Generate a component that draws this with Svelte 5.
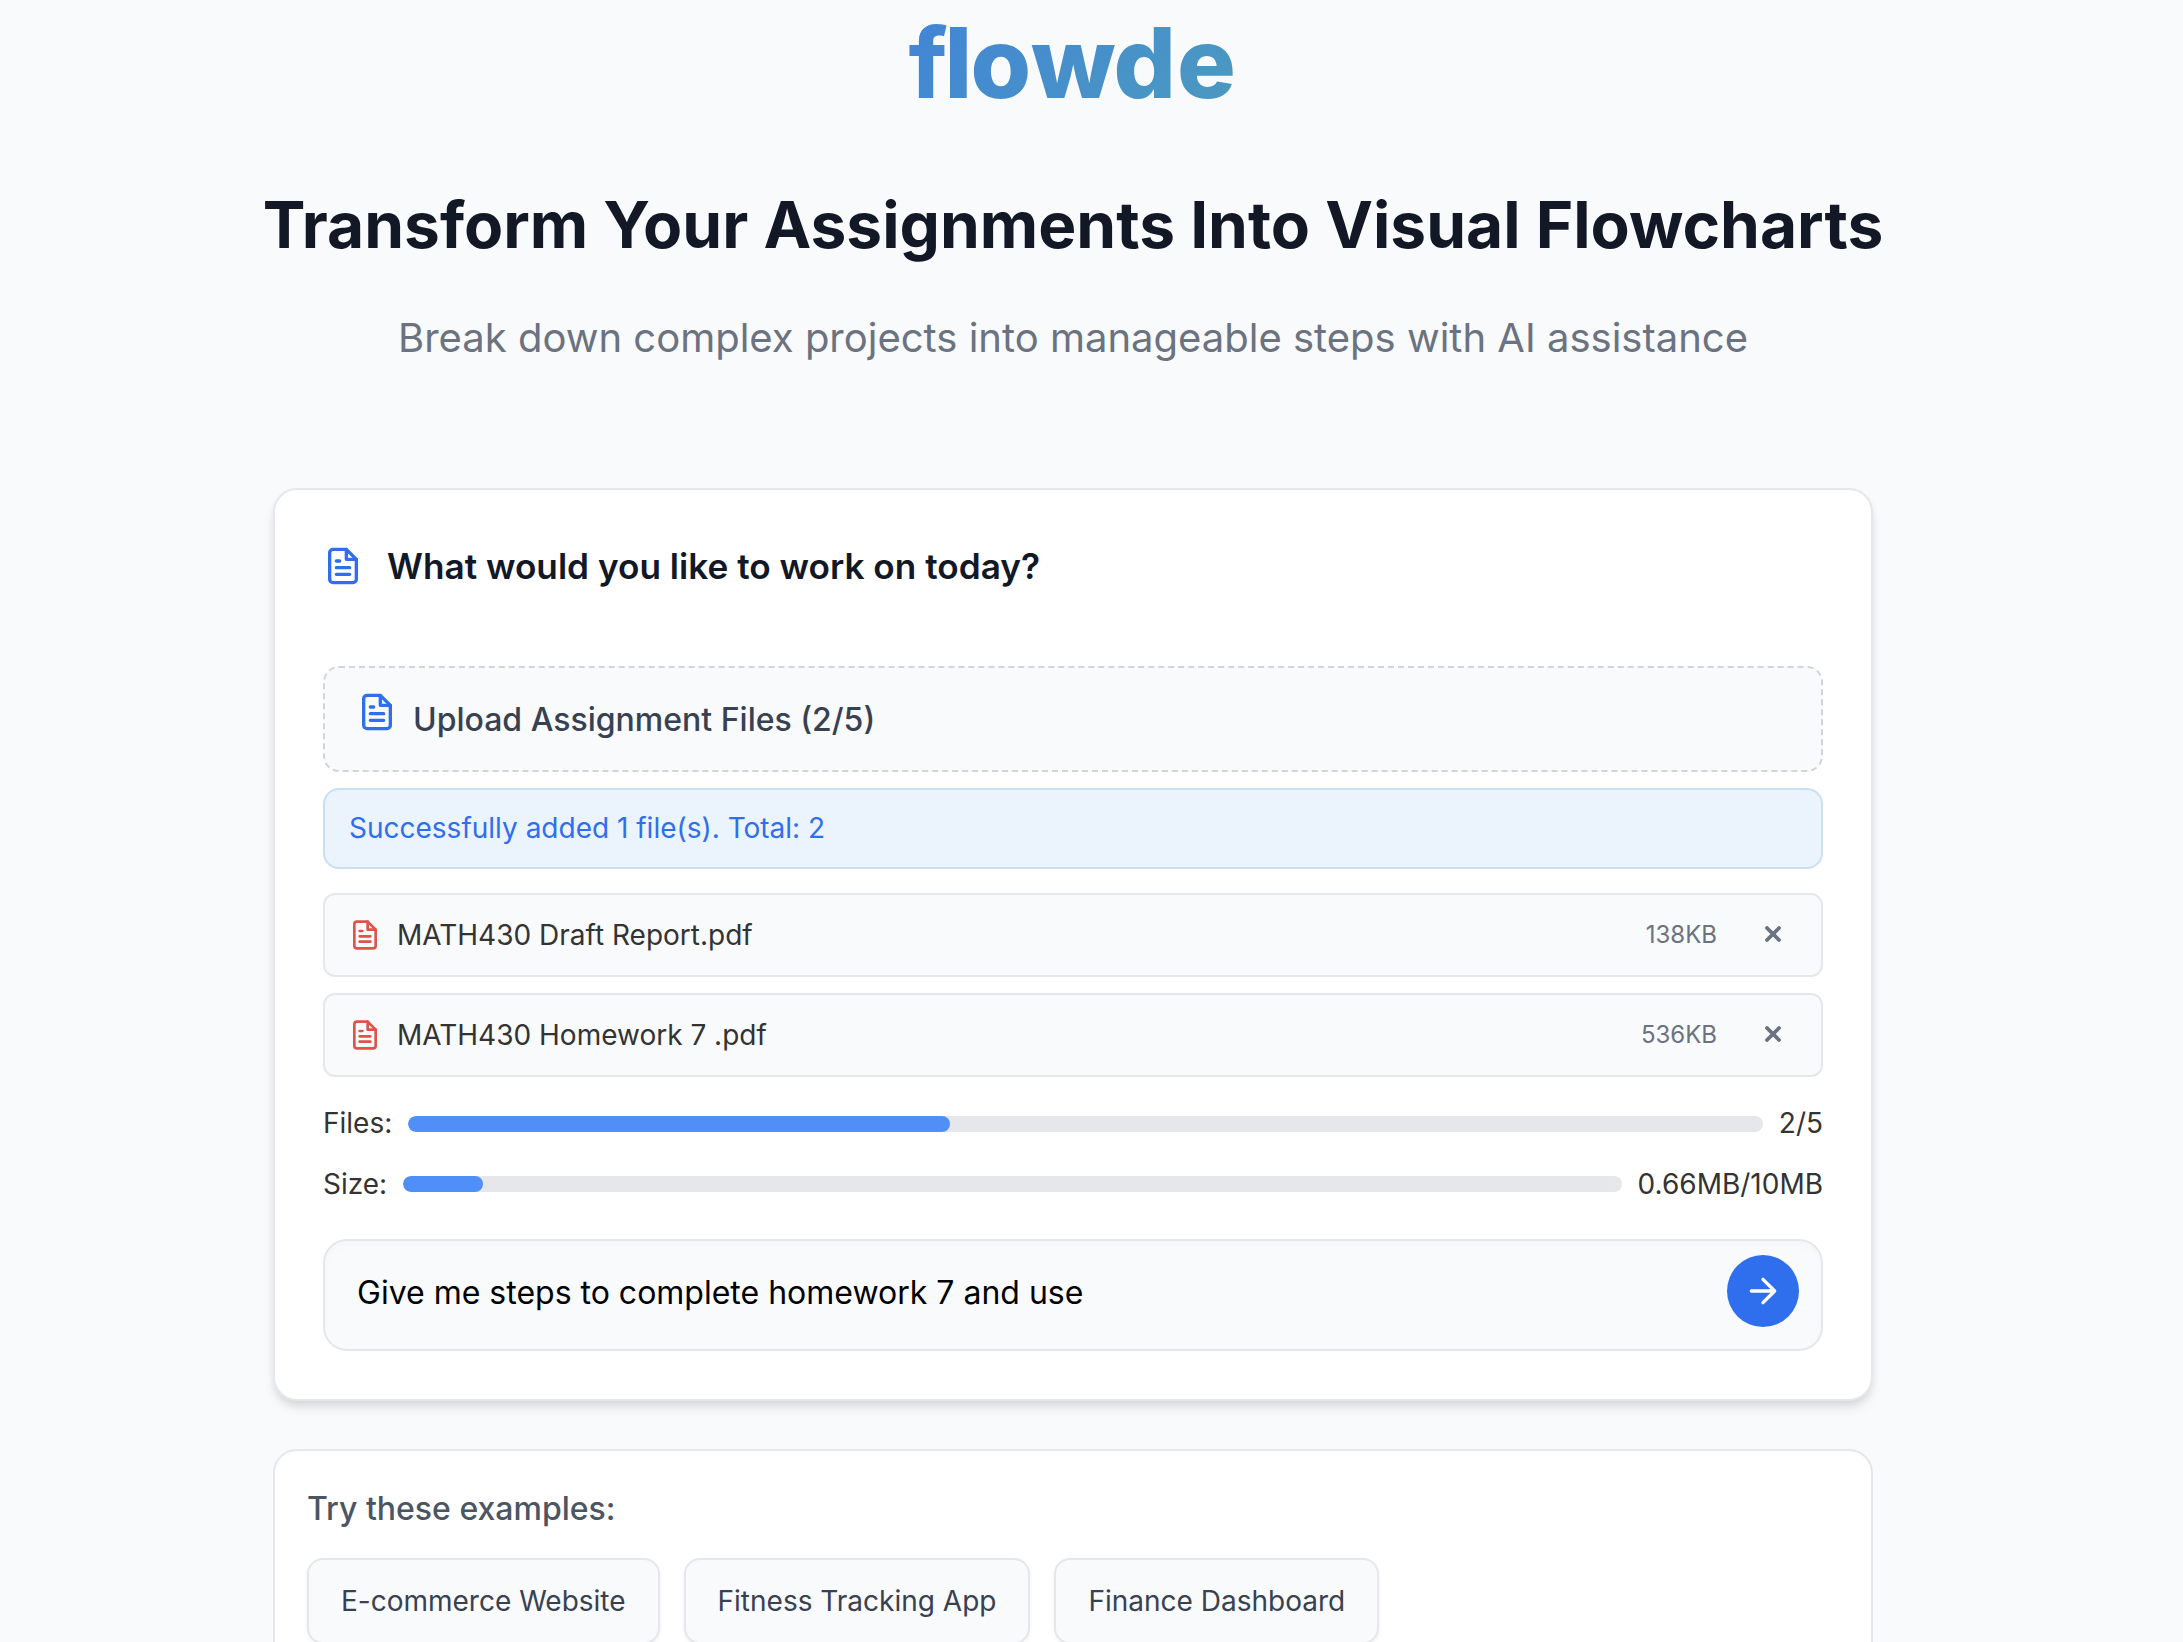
<script>
  const files = [
    { name: 'MATH430 Draft Report.pdf', size: '138KB' },
    { name: 'MATH430 Homework 7 .pdf', size: '536KB' }
  ];
  const meters = [
    { label: 'Files:', value: '2/5', percent: 40 },
    { label: 'Size:', value: '0.66MB/10MB', percent: 6.56 }
  ];
  const examples = ['E-commerce Website', 'Fitness Tracking App', 'Finance Dashboard'];
  const prompt = 'Give me steps to complete homework 7 and use';
</script>

{#snippet fileIcon(kind)}
  <svg class="icon {kind}" viewBox="0 0 24 24" aria-hidden="true">
    <path d="M14 2H6a2 2 0 0 0-2 2v16a2 2 0 0 0 2 2h12a2 2 0 0 0 2-2V8z" />
    <path d="M14 2v6h6M16 13H8M16 17H8M10 9H8" />
  </svg>
{/snippet}

<main>
  <header>
    <svg class="logo" viewBox="0 0 340 126">
      <defs>
        <linearGradient id="brand" gradientUnits="userSpaceOnUse" x1="60" y1="-40" x2="280" y2="170">
          <stop offset="0" stop-color="#4285d6" />
          <stop offset="1" stop-color="#4b9abf" />
        </linearGradient>
      </defs>
      <text x="5.5 41.5 67.5 128 210.5 274" y="98"><tspan class="narrow">f</tspan>lowde</text>
    </svg>
    <h1>Transform Your Assignments Into Visual Flowcharts</h1>
    <p>Break down complex projects into manageable steps with AI assistance</p>
  </header>

  <section class="card work">
    <h2>{@render fileIcon('large')}<span>What would you like to work on today?</span></h2>

    <div class="upload">{@render fileIcon('large raised')}<span>Upload Assignment Files (2/5)</span></div>
    <div class="notice">Successfully added 1 file(s). Total: 2</div>

    <ul class="files">
      {#each files as file}
        <li>
          {@render fileIcon('small')}
          <span class="name">{file.name}</span>
          <span class="size">{file.size}</span>
          <button class="remove" aria-label="Remove">
            <svg viewBox="0 0 16 16"><path d="M2 2l12 12M14 2L2 14" /></svg>
          </button>
        </li>
      {/each}
    </ul>

    <div class="meters">
      {#each meters as meter}
        <div class="meter">
          <span>{meter.label}</span>
          <div class="track"><div class="fill" style="width: {meter.percent}%"></div></div>
          <span>{meter.value}</span>
        </div>
      {/each}
    </div>

    <div class="prompt">
      <span>{prompt}</span>
      <button class="send" aria-label="Send">
        <svg viewBox="0 0 24 24"><path d="M5 12h14M12 5l7 7-7 7" /></svg>
      </button>
    </div>
  </section>

  <section class="card examples">
    <h3>Try these examples:</h3>
    <div class="chips">
      {#each examples as example}
        <button class="chip">{example}</button>
      {/each}
    </div>
  </section>
</main>

<style>
  :global(html) { overflow: hidden; }
  :global(body) { margin: 0; background: #f9fafc; }
  * { box-sizing: border-box; }
  main {
    width: 2146px;
    height: 1642px;
    overflow: hidden;
    display: flex;
    flex-direction: column;
    align-items: center;
    font-family: Inter, "Liberation Sans", sans-serif;
    font-size: 28px;
    color: #333;
  }
  button { font: inherit; padding: 0; border: 0; background: none; }
  svg { display: block; flex: none; fill: none; stroke: currentColor; stroke-width: 2; stroke-linecap: round; stroke-linejoin: round; }
  header {
    height: 488px;
    flex: none;
    display: flex;
    flex-direction: column;
    align-items: center;
    white-space: nowrap;
  }
  .logo { width: 340px; height: 126px; stroke: none; }
  .logo text { font-size: 98px; font-weight: 850; fill: url(#brand); }
  .logo .narrow { font-weight: 750; }
  h1 { margin: 59px 0 0; font-size: 64px; line-height: 80px; font-weight: 700; color: #121826; }
  p { margin: 43px 0 0; font-size: 40px; line-height: 60px; color: #6b7280; }
  .card {
    width: 1600px;
    flex: none;
    background: #fff;
    border: 2px solid #e5e7eb;
    border-radius: 24px;
  }
  .work {
    height: 913px;
    padding: 48px;
    box-shadow: 0 8px 12px -2px rgba(0, 0, 0, 0.1), 0 4px 8px -2px rgba(0, 0, 0, 0.08);
  }
  h2 {
    display: flex;
    align-items: center;
    gap: 24px;
    height: 56px;
    margin: 0 0 72px;
    font-size: 35.2px;
    font-weight: 600;
    color: #121826;
  }
  .icon.large { width: 40px; height: 40px; color: #2f6fed; }
  .icon.raised { margin-bottom: 15px; }
  .icon.small { width: 32px; height: 32px; color: #e0524a; }
  .upload {
    height: 106px;
    padding: 0 32px;
    display: flex;
    align-items: center;
    gap: 16px;
    border: 2px dashed #d1d5db;
    border-radius: 16px;
    background: #f9fafc;
    font-size: 32px;
    font-weight: 500;
    color: #374151;
  }
  .notice {
    height: 81px;
    margin: 16px 0 24px;
    padding: 0 24px 2px;
    display: flex;
    align-items: center;
    border: 2px solid #cbdff2;
    border-radius: 16px;
    background: #ebf3fc;
    color: #2f6fed;
  }
  .files { list-style: none; margin: 0; padding: 0; display: grid; gap: 16px; }
  .files li {
    height: 84px;
    padding: 0 24px;
    display: flex;
    align-items: center;
    border: 2px solid #e5e7eb;
    border-radius: 12px;
    background: #f9fafc;
  }
  .name { flex: 1; margin-left: 16px; }
  .size { padding-bottom: 2px; font-size: 24px; color: #6b7280; }
  .remove { width: 48px; height: 48px; margin-left: 32px; padding-bottom: 2px; display: grid; place-items: center; color: #6b7280; }
  .remove svg { width: 16px; height: 16px; stroke-width: 3.8; }
  .meters { margin-top: 17px; }
  .meter { height: 60px; display: flex; align-items: center; gap: 16px; }
  .meter span { padding-bottom: 2px; }
  .meter + .meter span { padding-bottom: 0; }
  .track { flex: 1; height: 16px; border-radius: 8px; background: #e5e7eb; overflow: hidden; }
  .fill { height: 100%; border-radius: 8px; background: #4f8ff7; }
  .prompt {
    height: 112px;
    margin-top: 25px;
    padding: 14px 22px 22px 32px;
    display: flex;
    align-items: center;
    justify-content: space-between;
    border: 2px solid #e5e7eb;
    border-radius: 24px;
    background: #f9fafc;
    box-shadow: inset 0 4px 8px rgba(0, 0, 0, 0.02);
    font-size: 32px;
    color: #000;
  }
  .prompt span { padding-top: 3px; }
  .send { width: 72px; height: 72px; display: grid; place-items: center; border-radius: 50%; background: #2f6fed; color: #fff; }
  .send svg { width: 40px; height: 40px; }
  .examples { height: 300px; margin-top: 48px; padding: 32px; }
  h3 { margin: 0; font-size: 32px; line-height: 51px; font-weight: 500; color: #4b5563; }
  .chips { display: flex; gap: 24px; margin-top: 24px; }
  .chip { height: 86px; padding: 0 32px; border: 2px solid #e5e7eb; border-radius: 16px; background: #f9fafc; color: #374151; box-shadow: 0 2px 4px rgba(0, 0, 0, 0.05); }
</style>
